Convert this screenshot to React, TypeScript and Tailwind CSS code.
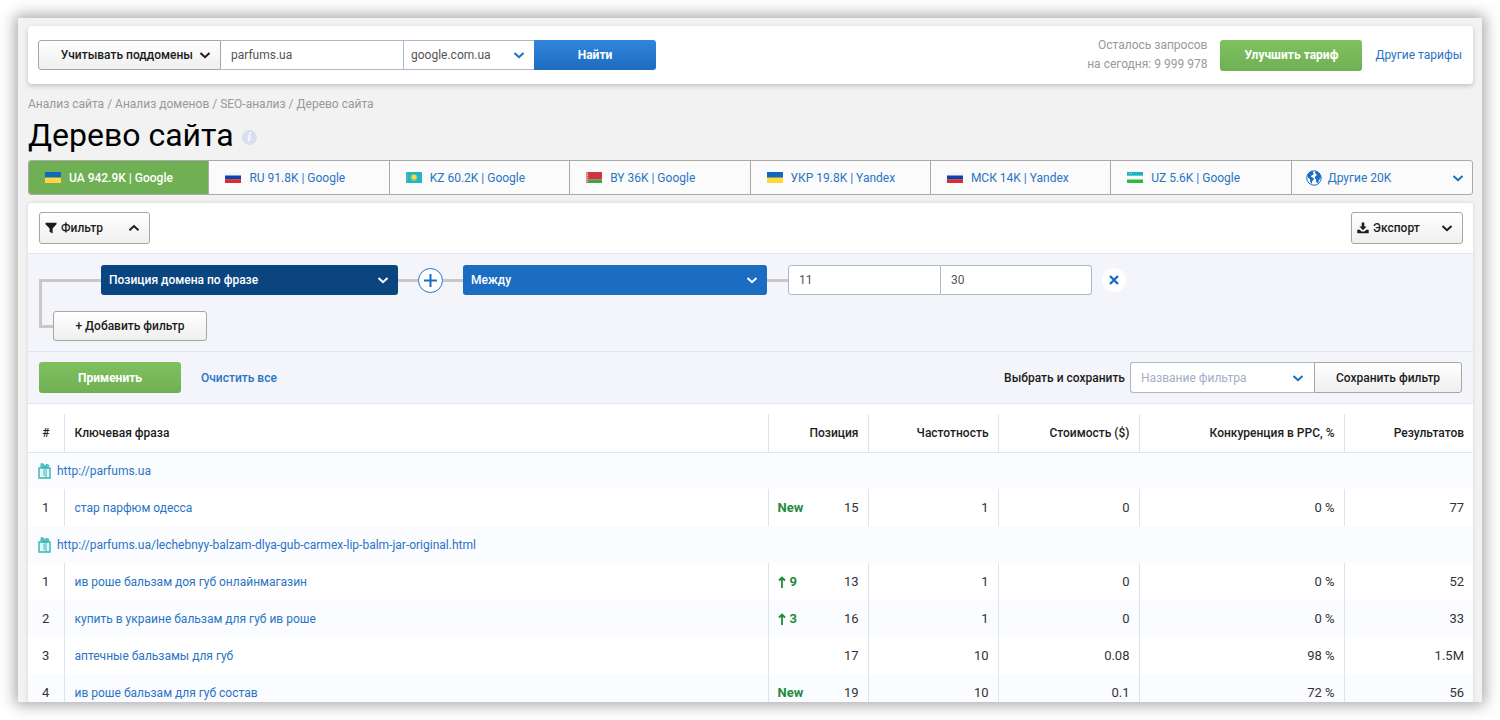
import { useState } from 'react'
import type { ReactNode } from 'react'

const tabs = [
  { flag: 'ua', label: 'UA 942.9K | Google' },
  { flag: 'ru', label: 'RU 91.8K | Google' },
  { flag: 'kz', label: 'KZ 60.2K | Google' },
  { flag: 'by', label: 'BY 36K | Google' },
  { flag: 'ua', label: 'УКР 19.8K | Yandex' },
  { flag: 'ru', label: 'МСК 14K | Yandex' },
  { flag: 'uz', label: 'UZ 5.6K | Google' },
]

const crumbs = ['Анализ сайта', 'Анализ доменов', 'SEO-анализ']

type Phrase = {
  text: string
  diff: string
  position: number
  frequency: number
  cost: string
  competition: string
  results: string
  striped?: boolean
}

const groups: { url: string; phrases: Phrase[] }[] = [
  {
    url: 'http://parfums.ua',
    phrases: [
      { text: 'стар парфюм одесса', diff: 'New', position: 15, frequency: 1, cost: '0', competition: '0 %', results: '77' },
    ],
  },
  {
    url: 'http://parfums.ua/lechebnyy-balzam-dlya-gub-carmex-lip-balm-jar-original.html',
    phrases: [
      { text: 'ив роше бальзам доя губ онлайнмагазин', diff: '9', position: 13, frequency: 1, cost: '0', competition: '0 %', results: '52' },
      { text: 'купить в украине бальзам для губ ив роше', diff: '3', position: 16, frequency: 1, cost: '0', competition: '0 %', results: '33', striped: true },
      { text: 'аптечные бальзамы для губ', diff: '', position: 17, frequency: 10, cost: '0.08', competition: '98 %', results: '1.5M' },
      { text: 'ив роше бальзам для губ состав', diff: 'New', position: 19, frequency: 10, cost: '0.1', competition: '72 %', results: '56', striped: true },
    ],
  },
]

const grayButton =
  'flex items-center border border-[#a6a6a6] bg-linear-to-b from-white to-[#efefef] font-medium text-[#1c1c1c]'
const greenButton =
  'h-[31px] w-[142px] shrink-0 rounded-[3px] bg-linear-to-b from-[#7fc15f] to-[#70b054] font-bold text-white'
const field = 'border border-[#b0b7ca] bg-white text-[#555] outline-none'

function Chevron({ up = false, className = '' }: { up?: boolean; className?: string }) {
  return (
    <svg viewBox="0 0 12 12" className={`pointer-events-none h-3 w-3 shrink-0 ${className}`} fill="none" stroke="currentColor" strokeWidth="2">
      <path d={up ? 'M1.5 8.2 6 4l4.5 4.2' : 'M1.5 4 6 8.2 10.5 4'} />
    </svg>
  )
}

function Flag({ code }: { code: string }) {
  return (
    <svg viewBox="0 0 16 11" className="h-[11px] w-4 shrink-0">
      {code === 'ua' && (
        <>
          <rect width="16" height="6" fill="#1167bd" />
          <rect y="5.5" width="16" height="5.5" fill="#ffd83d" />
        </>
      )}
      {code === 'ru' && (
        <>
          <rect width="16" height="4" fill="#f6f6f6" />
          <rect y="3.5" width="16" height="4" fill="#0f41ad" />
          <rect y="7.3" width="16" height="3.7" fill="#dd2a30" />
        </>
      )}
      {code === 'kz' && (
        <>
          <rect width="16" height="11" rx="0.5" fill="#23b3cb" />
          <path d="M1 1v9" stroke="#72bfa0" />
          <circle cx="8" cy="5.5" r="3.6" fill="#7cc483" />
          <circle cx="8" cy="5.2" r="2.4" fill="#ffd93b" />
        </>
      )}
      {code === 'by' && (
        <>
          <rect width="16" height="7.5" fill="#d0343c" />
          <rect y="7.5" width="16" height="3.5" fill="#3fa447" />
          <rect width="2.2" height="11" fill="#e9a7a8" />
          <path d="M1.100 0v11" stroke="#d0343c" strokeDasharray="1 1" />
        </>
      )}
      {code === 'uz' && (
        <>
          <rect width="16" height="11" fill="#f8f8f8" />
          <rect width="16" height="3.7" fill="#1cb2c2" />
          <rect y="7.5" width="16" height="3.5" fill="#2abb45" />
          <path d="M2 1.5h4" stroke="#9be0e6" strokeDasharray="1 1" />
        </>
      )}
    </svg>
  )
}

function Globe() {
  return (
    <svg viewBox="0 0 16 16" className="h-4 w-4 shrink-0">
      <circle cx="8" cy="8" r="7.2" fill="#fff" stroke="#1b6dc1" />
      <path
        fill="#1b6dc1"
        d="M1.200 5.200C2 3.200 3.600 1.700 5.600 1.100l1.800.5-.5 1.300 1 .4-.8 1.500-1.600.7-.6 1.200 1.200.6 1.900 1.300-.7 1.600-1.100.9-.4 2.300-.8.200-.9-2.400-.1-1.900-1.600-1.400z"
      />
      <path
        fill="#1b6dc1"
        d="M9.200 1c2.600.4 4.800 2.300 5.600 4.800l.3 2.400-1.400-.4.200 1.500-1.100 1.200-.2 1.600-1.500 1.200-1-1.700.2-2-1.500-1.200.3-1.800 1.500-1.200-.3-1.300-1.200-.8z"
      />
    </svg>
  )
}

function Gift() {
  return (
    <svg viewBox="0 0 13 16" className="h-4 w-[13px] shrink-0" fill="none" stroke="#36b5b7">
      <path d="M1 5h11v10H1z" strokeWidth="1.4" fill="#e5f7f7" />
      <path d="M6 6.500v6.500M8 5.500v9" />
      <path d="M6.500 5 3 3.600 3.300.9l2 .1 1.200 3 2-2.600 2 .9-.4 1.900z" strokeWidth="1.2" fill="#6fcbcd" />
    </svg>
  )
}

function Connector({ className }: { className: string }) {
  return <span className={`h-[3px] shrink-0 bg-[#c8c8c8] ${className}`} />
}

// native select with our own arrow laid over it
function Dropdown({ label, wrap, className, arrow, children }: {
  label: string
  wrap: string
  className: string
  arrow: string
  children: ReactNode
}) {
  return (
    <div className={`relative shrink-0 ${wrap}`}>
      <select aria-label={label} className={`h-full w-full appearance-none outline-none ${className}`}>
        {children}
      </select>
      <Chevron className={`absolute top-0 bottom-0 my-auto ${arrow}`} />
    </div>
  )
}

function PhraseRow({ item, index }: { item: Phrase; index: number }) {
  const cell = 'border-l border-[#dde3ef] pr-[9px] text-right'
  return (
    <tr className={item.striped ? 'h-[37px] bg-[#fafcff]' : 'h-[37px] bg-white'}>
      <td className="text-center">{index}</td>
      <td className="border-l border-[#dde3ef] pl-[10px] text-[12px]">
        <a href="#" className="text-[#2a74c4]">{item.text}</a>
      </td>
      <td className={cell}>
        <div className="flex items-center justify-between pl-[9px]">
          <span className="flex items-center gap-1 font-bold text-[#1f8b3b]">
            {item.diff && item.diff !== 'New' && (
              <svg viewBox="0 0 8 12" className="h-3 w-2" fill="none" stroke="currentColor" strokeWidth="1.8">
                <path d="M4 12V1.500M1 4.500l3-3 3 3" />
              </svg>
            )}
            {item.diff}
          </span>
          {item.position}
        </div>
      </td>
      <td className={cell}>{item.frequency}</td>
      <td className={cell}>{item.cost}</td>
      <td className={cell}>{item.competition}</td>
      <td className={cell}>{item.results}</td>
    </tr>
  )
}

export default function App() {
  const [activeTab, setActiveTab] = useState(0)
  const [domain, setDomain] = useState('parfums.ua')
  const [from, setFrom] = useState('11')
  const [to, setTo] = useState('30')

  const th = 'border-l border-[#dde3ef] pr-[9px] text-right font-medium'

  return (
    <div className="h-screen bg-white p-[18px] font-['Roboto',sans-serif] text-[12px] leading-5">
      <main className="h-full overflow-hidden bg-[#f2f2f2] pt-2 pr-[9px] pl-[10px] shadow-[0_0_14px_3px_rgba(0,0,0,0.35)]">
        <header className="flex items-center justify-between rounded-[4px] bg-white py-[10px] pr-[11px] pl-[10px] shadow-[0_2px_5px_rgba(0,0,0,0.2)]">
          <form className="flex h-[30px]" onSubmit={(e) => e.preventDefault()}>
            <button type="button" className={`${grayButton} w-[183px] justify-end gap-[6px] rounded-l-[3px] pr-[9px]`}>
              Учитывать поддомены
              <Chevron />
            </button>
            <input
              aria-label="Домен"
              value={domain}
              onChange={(e) => setDomain(e.target.value)}
              className={`${field} w-[182px] border-x-0 px-[10px]`}
            />
            <Dropdown label="Поисковая система" wrap="w-[131px]" className={`${field} border-r-0 pl-[7px]`} arrow="right-[9px] text-[#1b6dc1]">
              <option>google.com.ua</option>
            </Dropdown>
            <button type="submit" className="w-[122px] rounded-r-[3px] bg-linear-to-b from-[#3086dc] to-[#1c6cbf] font-bold text-white">
              Найти
            </button>
          </form>
          <div className="flex items-center">
            <p className="mr-[13px] text-right leading-[19px] text-[#999]">
              Осталось запросов
              <br />
              на сегодня: 9 999 978
            </p>
            <button type="button" className={greenButton}>Улучшить тариф</button>
            <a href="#" className="ml-[13px] text-[#2a74c4]">Другие тарифы</a>
          </div>
        </header>

        <nav className="mt-[10px] text-[#999]">
          {crumbs.map((crumb) => (
            <span key={crumb}>
              <a href="#">{crumb}</a>
              {' / '}
            </span>
          ))}
          <span>Дерево сайта</span>
        </nav>
        <div className="flex h-[46px] items-center gap-2 pb-1">
          <h1 className="text-[32px] leading-10 text-black">Дерево сайта</h1>
          <button
            type="button"
            aria-label="Подсказка"
            className="mt-1 h-[15px] w-[15px] rounded-full bg-[#d8e0ef] font-['Liberation_Serif',serif] leading-[15px] font-bold text-white italic"
          >
            i
          </button>
        </div>

        <div className="grid h-[35px] grid-cols-8 divide-x divide-[#aaa] overflow-hidden rounded-[3px] border border-[#aaa] bg-[#fbfbfb]">
          {tabs.map((tab, i) => (
            <button
              key={tab.label}
              type="button"
              onClick={() => setActiveTab(i)}
              className={
                i === activeTab
                  ? 'flex items-center gap-2 bg-[#70b054] pl-4 font-medium text-white'
                  : 'flex items-center gap-2 pl-4 text-[#2a74c4]'
              }
            >
              <Flag code={tab.flag} />
              {tab.label}
            </button>
          ))}
          <button type="button" className="flex items-center gap-[6px] pr-2 pl-[14px] text-[#2a74c4]">
            <Globe />
            Другие 20K
            <Chevron className="ml-auto text-[#1b6dc1]" />
          </button>
        </div>

        <section className="mt-2 rounded-t-[3px] bg-white shadow-[0_0_4px_rgba(0,0,0,0.12)]">
          <div className="flex justify-between py-[9px] pr-[10px] pl-[11px]">
            <button type="button" className={`${grayButton} h-[32px] w-[111px] rounded-[3px] pr-[9px] pl-[5px]`}>
              <svg viewBox="0 0 12 12" className="mr-1 h-3 w-3" fill="currentColor">
                <path d="M.5.8h11v1.500L7.600 6.600v5L4.600 9.700V6.600L.5 2.300z" />
              </svg>
              Фильтр
              <Chevron up className="ml-auto" />
            </button>
            <button type="button" className={`${grayButton} h-[32px] w-[112px] rounded-[3px] pr-[9px] pl-[5px]`}>
              <svg viewBox="0 0 12 12" className="mr-1 h-3 w-3" fill="currentColor">
                <path d="M4.700.5h2.600v4h2.300L6 8.200 2.400 4.500h2.300zM.3 7.800h2.500L4.500 9.500h3l1.700-1.700h2.500v3.400H.3z" />
              </svg>
              Экспорт
              <Chevron className="ml-auto" />
            </button>
          </div>

          <div className="border-t border-[#dfe6f2] bg-[#f3f5fa] pt-[11px] pr-[10px] pb-[10px] pl-[11px]">
            <div className="flex h-[30px] items-center">
              <Connector className="w-[62px]" />
              <Dropdown label="Параметр" wrap="h-full w-[297px]" className="rounded-[3px] bg-[#0a457f] pl-[8px] font-medium text-white" arrow="right-[9px] text-white">
                <option>Позиция домена по фразе</option>
              </Dropdown>
              <Connector className="w-[20px]" />
              <button type="button" aria-label="Добавить условие" className="h-[25px] w-[25px] shrink-0 rounded-full border border-[#2a74c4] bg-white p-[5px] text-[#1b6dc1]">
                <svg viewBox="0 0 13 13" className="h-[13px] w-[13px]" stroke="currentColor" strokeWidth="2">
                  <path d="M6.500 0v13M0 6.500h13" />
                </svg>
              </button>
              <Connector className="w-[20px]" />
              <Dropdown label="Условие" wrap="h-full w-[304px]" className="rounded-[3px] bg-[#1b6dc1] pl-[8px] font-medium text-white" arrow="right-[9px] text-white">
                <option>Между</option>
              </Dropdown>
              <Connector className="w-[21px]" />
              <input aria-label="От" value={from} onChange={(e) => setFrom(e.target.value)} className={`${field} h-full w-[153px] rounded-l-[3px] px-[10px]`} />
              <input aria-label="До" value={to} onChange={(e) => setTo(e.target.value)} className={`${field} h-full w-[151px] rounded-r-[3px] border-l-0 px-[10px]`} />
              <button type="button" aria-label="Удалить условие" className="ml-[10px] h-6 w-6 shrink-0 rounded-full bg-white p-[7px] text-[#1b6dc1]">
                <svg viewBox="0 0 10 10" className="h-[10px] w-[10px]" stroke="currentColor" strokeWidth="2.4">
                  <path d="m1 1 8 8M9 1 1 9" />
                </svg>
              </button>
            </div>
            <div className="flex">
              <span className="-mt-4 mb-[13px] w-[14px] border-b-3 border-l-3 border-[#c8c8c8]" />
              <button type="button" className={`${grayButton} mt-4 h-[30px] w-[154px] justify-center rounded-[3px]`}>
                + Добавить фильтр
              </button>
            </div>
          </div>

          <div className="flex items-center border-y border-[#dfe6f2] bg-[#f3f5fa] py-[10px] pr-[11px] pl-[11px]">
            <button type="button" className={greenButton}>Применить</button>
            <a href="#" className="ml-[20px] font-medium text-[#2a74c4]">Очистить все</a>
            <label htmlFor="saved" className="mr-[5px] ml-auto font-medium text-[#1c1c1c]">Выбрать и сохранить</label>
            <div className="relative h-[31px] w-[184px]">
              <input id="saved" placeholder="Название фильтра" className={`${field} h-full w-full rounded-l-[3px] border-r-0 px-[10px] placeholder-[#a3adc6]`} />
              <Chevron className="absolute top-0 right-[10px] bottom-0 my-auto text-[#1b6dc1]" />
            </div>
            <button type="button" className={`${grayButton} h-[31px] w-[148px] justify-center rounded-r-[3px]`}>
              Сохранить фильтр
            </button>
          </div>

          <table className="mt-[10px] w-full table-fixed text-[13px] text-[#333]">
            <colgroup>
              <col className="w-[36px]" />
              <col />
              <col className="w-[100px]" />
              <col className="w-[130px]" />
              <col className="w-[141px]" />
              <col className="w-[205px]" />
              <col className="w-[129px]" />
            </colgroup>
            <thead>
              <tr className="h-[38px] border-b border-[#dfe6f2] text-[12px] text-[#1c1c1c]">
                <th className="font-medium">#</th>
                <th className="border-l border-[#dde3ef] pl-[10px] text-left font-medium">Ключевая фраза</th>
                <th className={th}>Позиция</th>
                <th className={th}>Частотность</th>
                <th className={th}>Стоимость ($)</th>
                <th className={th}>Конкуренция в PPC, %</th>
                <th className={th}>Результатов</th>
              </tr>
            </thead>
            {groups.map((group) => (
              <tbody key={group.url}>
                <tr className="h-[37px] bg-[#fafcff]">
                  <td colSpan={7} className="pl-[10px] text-[12px]">
                    <div className="flex items-center gap-[6px]">
                      <Gift />
                      <a href="#" className="text-[#2a74c4]">{group.url}</a>
                    </div>
                  </td>
                </tr>
                {group.phrases.map((item, i) => (
                  <PhraseRow key={item.text} item={item} index={i + 1} />
                ))}
              </tbody>
            ))}
          </table>
        </section>
      </main>
    </div>
  )
}
